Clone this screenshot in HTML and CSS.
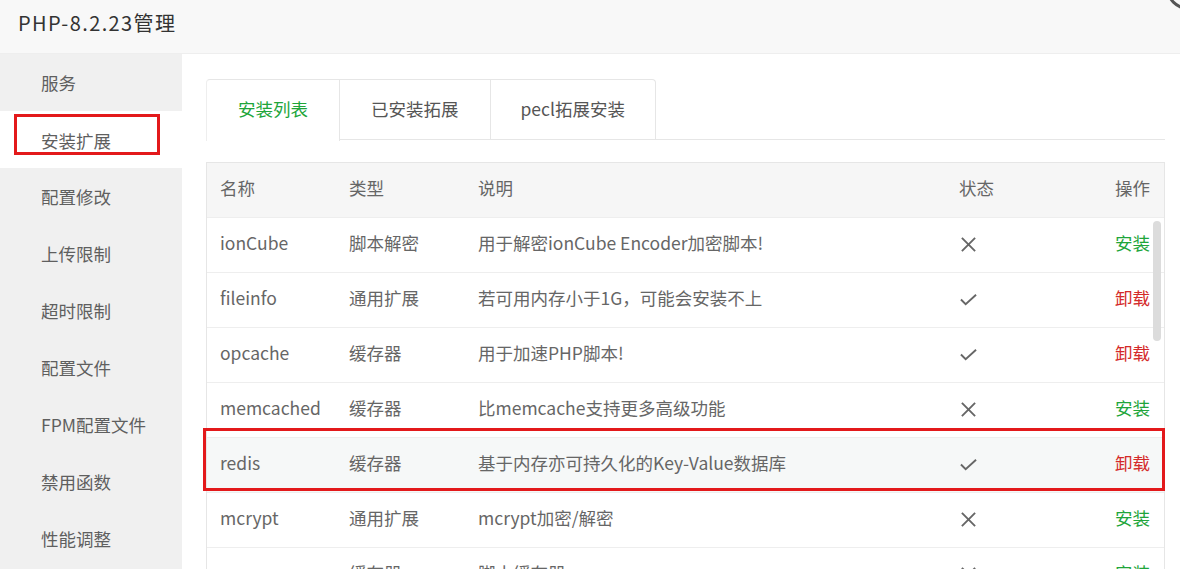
FILE: index.html
```html
<!DOCTYPE html>
<html lang="zh-CN">
<head>
    <meta charset="UTF-8" />
    <meta name="viewport" content="width=device-width, initial-scale=1" />
    <title>PHP-8.2.23管理</title>
    <link rel="stylesheet" href="styles.css">
</head>
<body>
    <div class="layer">
        <div class="layer-title">PHP-8.2.23管理</div>
        <span class="layer-close"></span>
        <div class="layer-body">
            <ul class="side-menu">
                <li>服务</li>
                <li class="active">安装扩展</li>
                <li>配置修改</li>
                <li>上传限制</li>
                <li>超时限制</li>
                <li>配置文件</li>
                <li>FPM配置文件</li>
                <li>禁用函数</li>
                <li>性能调整</li>
            </ul>
            <span class="mark mark-menu"></span>

            <div class="main">
                <div class="tabs">
                    <div class="tab on">安装列表</div>
                    <div class="tab">已安装拓展</div>
                    <div class="tab">pecl拓展安装</div>
                </div>

                <div class="table-wrap">
                    <table class="ext-table">
                        <colgroup>
                            <col style="width:129px">
                            <col style="width:129px">
                            <col style="width:481px">
                            <col style="width:100px">
                            <col>
                        </colgroup>
                        <thead>
                            <tr>
                                <th>名称</th>
                                <th>类型</th>
                                <th>说明</th>
                                <th>状态</th>
                                <th class="op">操作</th>
                            </tr>
                        </thead>
                        <tbody>
                            <tr>
                                <td>ionCube</td>
                                <td>脚本解密</td>
                                <td>用于解密ionCube Encoder加密脚本!</td>
                                <td><svg class="st" viewBox="0 0 18 18"><path d="M2 2L16 16M16 2L2 16"/></svg></td>
                                <td class="op"><a class="install">安装</a></td>
                            </tr>
                            <tr>
                                <td>fileinfo</td>
                                <td>通用扩展</td>
                                <td>若可用内存小于1G，可能会安装不上</td>
                                <td><svg class="st" viewBox="0 0 18 18"><path d="M1 9L6 14L17 4"/></svg></td>
                                <td class="op"><a class="remove">卸载</a></td>
                            </tr>
                            <tr>
                                <td>opcache</td>
                                <td>缓存器</td>
                                <td>用于加速PHP脚本!</td>
                                <td><svg class="st" viewBox="0 0 18 18"><path d="M1 9L6 14L17 4"/></svg></td>
                                <td class="op"><a class="remove">卸载</a></td>
                            </tr>
                            <tr>
                                <td>memcached</td>
                                <td>缓存器</td>
                                <td>比memcache支持更多高级功能</td>
                                <td><svg class="st" viewBox="0 0 18 18"><path d="M2 2L16 16M16 2L2 16"/></svg></td>
                                <td class="op"><a class="install">安装</a></td>
                            </tr>
                            <tr class="hover">
                                <td>redis</td>
                                <td>缓存器</td>
                                <td>基于内存亦可持久化的Key-Value数据库</td>
                                <td><svg class="st" viewBox="0 0 18 18"><path d="M1 9L6 14L17 4"/></svg></td>
                                <td class="op"><a class="remove">卸载</a></td>
                            </tr>
                            <tr>
                                <td>mcrypt</td>
                                <td>通用扩展</td>
                                <td>mcrypt加密/解密</td>
                                <td><svg class="st" viewBox="0 0 18 18"><path d="M2 2L16 16M16 2L2 16"/></svg></td>
                                <td class="op"><a class="install">安装</a></td>
                            </tr>
                            <tr>
                                <td>apcu</td>
                                <td>缓存器</td>
                                <td>脚本缓存器</td>
                                <td><svg class="st" viewBox="0 0 18 18"><path d="M2 2L16 16M16 2L2 16"/></svg></td>
                                <td class="op"><a class="install">安装</a></td>
                            </tr>
                        </tbody>
                    </table>
                    <span class="scroll-thumb"></span>
                    <span class="mark mark-row"></span>
                </div>
            </div>
        </div>
    </div>
</body>
</html>
```

FILE: styles.css
```css
html, body {
    margin: 0;
    padding: 0;
    height: 100%;
    overflow: hidden;
}
body {
    font-family: "Noto Sans CJK SC", "Noto Sans", sans-serif;
    font-size: 17.5px;
    color: #666;
    background: #fff;
}
.layer {
    position: relative;
    height: 100%;
}
.layer-title {
    height: 53px;
    line-height: 46px;
    padding-left: 18px;
    font-size: 20px;
    letter-spacing: 1.4px;
    color: #333;
    background: #f8f8f8;
    border-bottom: 1px solid #eee;
}
/* close button, pushed mostly out of the corner */
.layer-close {
    position: absolute;
    top: -35px;
    right: -31px;
    width: 45px;
    height: 45px;
    box-sizing: border-box;
    border-radius: 50%;
    border: 3px solid #555;
    background: #f8f8f8;
}
.layer-body {
    position: relative;
    display: flex;
    height: calc(100% - 54px);
}
.side-menu {
    list-style: none;
    margin: 0;
    padding: 0;
    width: 182px;
    flex-shrink: 0;
    background: #f0f0f0;
}
.side-menu li {
    height: 57px;
    line-height: 57px;
    padding-left: 41px;
    color: #5f5f5f;
}
.side-menu li.active {
    background: #fff;
    line-height: 60px;
}
.main {
    flex: 1;
    padding: 25px 15px 0 24px;
    min-width: 0;
}
.tabs {
    display: flex;
    height: 60px;
    border-bottom: 1px solid #e6e6e6;
}
.tab {
    padding: 0 31px;
    line-height: 58px;
    color: #555;
    border: 1px solid #e6e6e6;
    border-left: none;
    border-bottom: none;
    background: #fff;
}
.tab:first-child {
    border-left: 1px solid #eee;
    border-radius: 4px 0 0 0;
}
.tab:last-child {
    border-radius: 0 4px 0 0;
    padding: 0 30px;
}
.tab.on {
    color: #20a53a;
    margin-bottom: -1px;
    height: 61px;
}
.table-wrap {
    position: relative;
    margin-top: 22px;
    border-top: 1px solid #e6e6e6;
    border-left: 1px solid #e6e6e6;
    border-right: 1px solid #e6e6e6;
}
.ext-table {
    width: 100%;
    border-collapse: collapse;
    table-layout: fixed;
}
.ext-table th,
.ext-table td {
    height: 54px;
    padding: 0 13px;
    line-height: 50px;
    vertical-align: top;
    white-space: nowrap;
    border-bottom: 1px solid #eee;
}
.ext-table th {
    text-align: left;
    font-weight: normal;
    color: #666;
    background: #f6f6f6;
}
.ext-table .op {
    text-align: right;
    padding-right: 14px;
}
.ext-table tr.hover td {
    background: #f6f8f8;
}
.st {
    display: block;
    width: 17px;
    height: 17px;
    margin: 18px 0 0 1px;
    fill: none;
    stroke: #666;
    stroke-width: 2;
}
.install {
    color: #20a53a;
}
.remove {
    color: #d42a2a;
}
.scroll-thumb {
    position: absolute;
    top: 58px;
    right: 3px;
    width: 8px;
    height: 120px;
    border-radius: 4px;
    background: #dcdcdc;
}
/* red annotation frames */
.mark {
    position: absolute;
    border: 3px solid #e3191b;
    pointer-events: none;
}
.mark-menu {
    left: 14px;
    top: 60px;
    width: 140px;
    height: 35px;
}
.mark-row {
    left: -4px;
    top: 265px;
    width: 956px;
    height: 57px;
}
```
